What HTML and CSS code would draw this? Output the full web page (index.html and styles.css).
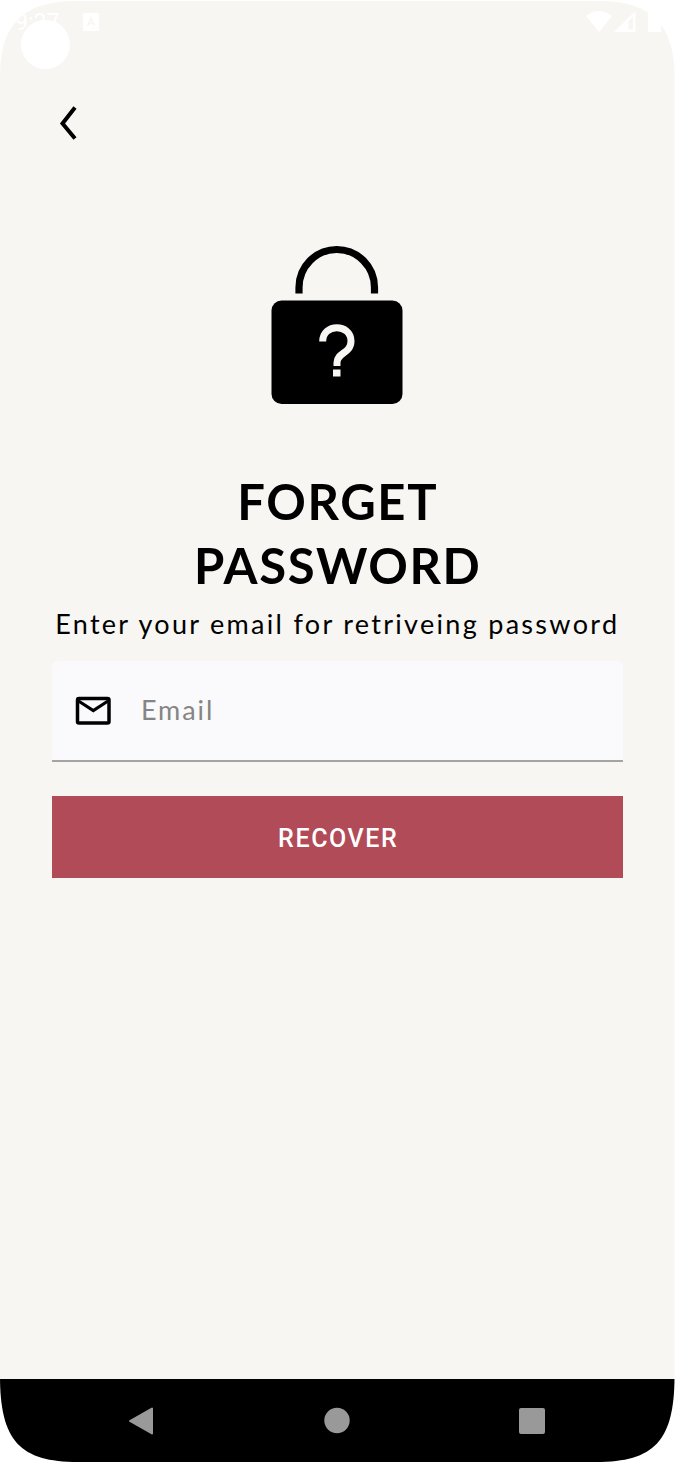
FILE: index.html
```html
<!DOCTYPE html>
<html lang="en">
<head>
<meta charset="utf-8">
<title>Forget Password</title>
<link rel="stylesheet" href="styles.css">
</head>
<body>
<div class="phone">
  <header class="status">
    <span class="time">9:27</span>
    <svg class="app" width="16" height="18" viewBox="0 0 16 18"><rect width="16" height="18" rx="1.5" fill="#fff"/><path d="M4.500 13 8 5l3.500 8M5.700 10.500h4.600" fill="none" stroke="#f7f6f2" stroke-width="1.600"/><path d="M9 15.500h5" stroke="#f7f6f2" stroke-dasharray="1 1"/></svg>
    <svg class="signals" width="78" height="24" viewBox="0 0 78 24"><path d="M0 5Q13-5 26 5L13 21Z" fill="#fff"/><path fill-rule="evenodd" d="M28 21 49.500 0v21ZM42.500 10v8.500h4.500V5.500Z" fill="#fff"/><path d="M62 0h13v21H62Z" fill="#fff"/></svg>
    <span class="camera"></span>
  </header>
  <main class="content">
    <svg class="back" width="20" height="36" viewBox="0 0 20 36"><path d="M16 2.500 3.500 18.500l12.500 15" fill="none" stroke="#000" stroke-width="4"/></svg>
    <svg class="lock" width="132" height="160" viewBox="0 0 132 160">
      <path d="M28 48.500V42.500a37.750 38 0 0 1 75.500 0v6" fill="none" stroke="#000" stroke-width="7.200"/>
      <rect x=".5" y="55.500" width="131" height="103.500" rx="10"/>
      <path d="M51.700 96.500c0-18.500 28.300-18 28.300-.5 0 12.500-14 11.500-14 21.500v3.500" fill="none" stroke="#f7f6f2" stroke-width="7"/>
      <path d="M62 124.500h7.500v7H62z" fill="#f7f6f2"/>
    </svg>
    <h1 class="title"><span class="line">FORGET</span><span class="line">PASSWORD</span></h1>
    <p class="subtitle">Enter your email for retriveing password</p>
    <div class="field">
      <svg width="36" height="30" viewBox="0 0 36 30"><rect x="2.500" y="2.500" width="31.500" height="24.500" rx="1.500" fill="none" stroke="#000" stroke-width="3.500"/><path d="m3.500 5 14.800 9.500L33 5" fill="none" stroke="#000" stroke-width="3.200"/></svg>
      <span class="placeholder">Email</span>
    </div>
    <button class="recover">RECOVER</button>
  </main>
  <nav class="nav">
    <svg width="28" height="30" viewBox="0 0 28 30"><path d="M3 15 25 2.500v25Z" fill="#999" stroke="#999" stroke-width="2" stroke-linejoin="round"/></svg>
    <svg width="28" height="30" viewBox="0 0 28 30"><circle cx="15" cy="14.500" r="12.700" fill="#999"/></svg>
    <svg width="28" height="30" viewBox="0 0 28 30"><rect x="1" y="2" width="26" height="26" rx="2" fill="#999"/></svg>
  </nav>
</div>
</body>
</html>
```
FILE: styles.css
```css
body {
  margin: 0;
  background: #fff;
}

.phone {
  width: 674.5px;
  height: 1461px;
  margin-top: 1px;
  display: flex;
  flex-direction: column;
  background: #f7f6f2;
  clip-path: path("M0 75C0 25 22 0 75 0H600C652 0 674.5 25 674.5 75V1375C674.5 1440 654 1461 596 1461H78C20 1461 0 1440 0 1375Z");
}

.status {
  position: relative;
  display: flex;
  height: 80px;
  box-sizing: border-box;
  padding: 10px 11px 0 15px;
  align-items: flex-start;
}

.time {
  width: 68px;
  color: #fff;
  font: 23px/24px Roboto, sans-serif;
}

.app {
  margin-top: 2px;
}

.signals {
  margin-left: auto;
}

.camera {
  position: absolute;
  left: 21px;
  top: 19px;
  width: 49px;
  height: 49px;
  border-radius: 50%;
  background: #fff;
}

.content {
  display: flex;
  flex: 1;
  flex-direction: column;
  padding: 24px 52px 0;
  font-family: Lato, sans-serif;
}

.back {
  margin-left: 7px;
}

.lock {
  align-self: center;
  margin-top: 104px;
}

.title {
  display: flex;
  flex-direction: column;
  align-items: center;
  margin: 64px 0 0;
  font-size: 49px;
  line-height: 64px;
  font-weight: 700;
  letter-spacing: 1.600px;
}

.line {
  margin-right: -1px;
}

.subtitle {
  margin: 9px -20px 0;
  text-align: center;
  white-space: nowrap;
  font-size: 27px;
  line-height: 36px;
  letter-spacing: 2.300px;
}

.field {
  display: flex;
  height: 101px;
  box-sizing: border-box;
  margin-top: 19px;
  padding: 0 23px;
  align-items: center;
  gap: 30px;
  background: #fafafc;
  border-bottom: 2px solid #a3a4a4;
  border-radius: 6px 6px 0 0;
}

.placeholder {
  margin-top: -2px;
  color: #858585;
  font-size: 27px;
  letter-spacing: 1.900px;
}

.recover {
  height: 82px;
  margin-top: 34px;
  padding: 2px 0 0 2px;
  border: 0;
  background: #b24b58;
  color: #fff;
  font: 500 25px Roboto, sans-serif;
  letter-spacing: 1.600px;
}

.nav {
  display: flex;
  height: 83px;
  box-sizing: border-box;
  padding: 0 129px 0 127px;
  align-items: center;
  justify-content: space-between;
  background: #000;
}
```
